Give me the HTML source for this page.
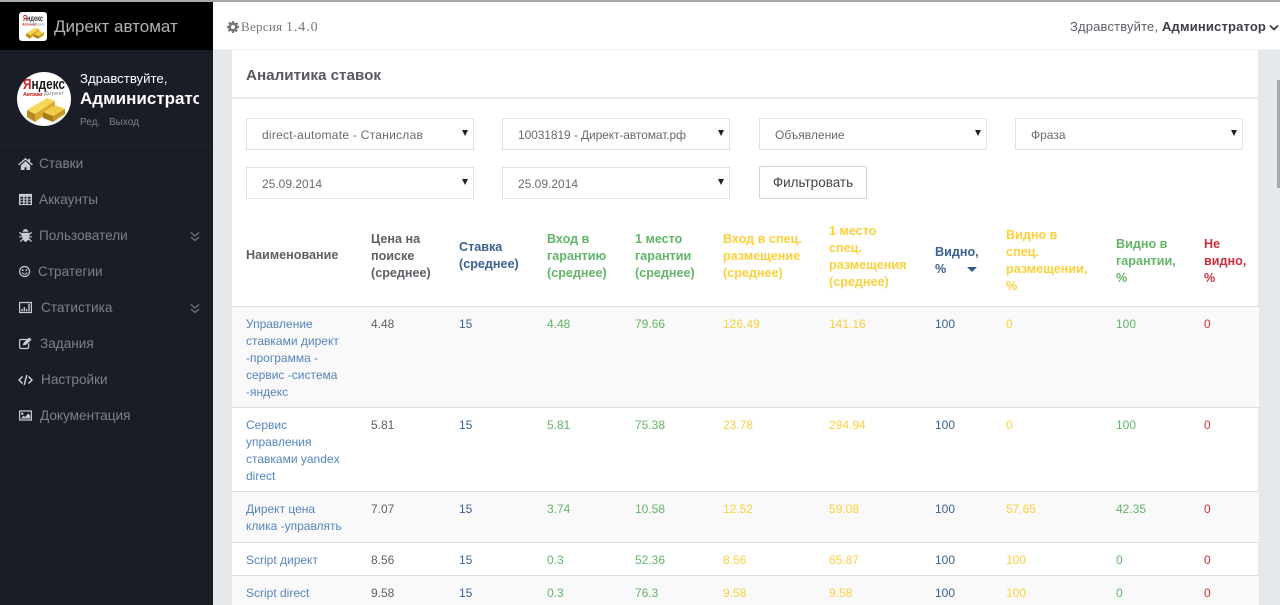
<!DOCTYPE html>
<html lang="ru"><head><meta charset="utf-8"><title>Аналитика ставок</title>
<style>
html,body{margin:0;padding:0;width:1280px;height:605px;overflow:hidden;background:#e5e9ec;font-family:"Liberation Sans",sans-serif;font-size:12px;color:#58595f}
.a{position:absolute}
.t{position:absolute;white-space:nowrap;line-height:17px}
.h{font-weight:bold;font-size:12.6px}
.sel{position:absolute;width:226px;height:30px;background:#fff;border:1px solid #e2e2e4}
.sel span{position:absolute;left:15px;top:7.5px;line-height:17px;white-space:nowrap;color:#6a6a6e}
.sel i{position:absolute;right:5px;top:11px;width:0;height:0;border-left:3.5px solid transparent;border-right:3.5px solid transparent;border-top:6px solid #222}
.m{position:absolute;white-space:nowrap;color:#7d8087;font-size:13.6px;line-height:18px}
.ic{position:absolute;left:18px;width:15px;height:13px;fill:#c9cbd0;stroke:none}
.k{color:#5f6066}.b{color:#3a6292}.g{color:#63b568}.y{color:#fcd03c}.r{color:#c9303c}.l{color:#5485bc}
</style></head><body>
<div class="a" style="left:0;top:0;width:1280px;height:2px;background:#a9a9a9"></div>

<!-- sidebar -->
<div class="a" style="left:0;top:2px;width:213px;height:603px;background:#1a1d26"></div>
<div class="a" style="left:0;top:2px;width:213px;height:48px;background:#000"></div>
<svg class="a" style="left:19px;top:12px" width="28" height="29" viewBox="0 0 28 29">
<rect width="28" height="29" rx="3" fill="#fff"/>
<text x="14" y="9" text-anchor="middle" font-family="Liberation Sans" font-weight="bold" font-size="8" textLength="20" lengthAdjust="spacingAndGlyphs" fill="#333"><tspan fill="#b3242a">Я</tspan>ндекс</text>
<text x="3" y="13.500" font-family="Liberation Sans" font-weight="bold" font-size="3.500" fill="#c9302c">Автомат</text>
<text x="15" y="13.500" font-family="Liberation Sans" font-size="3.500" fill="#888">Директ</text>
<g transform="translate(2.500 3.300) scale(.47)">
<path d="M10 38L30 26 38 29 18 42z" fill="#f4d75c"/><path d="M10 38l8 4v8l-8-5z" fill="#b8891c"/><path d="M18 42l20-13v7L18 50z" fill="#d9aa2c"/>
<path d="M26 40l12-7 10 4-12 7z" fill="#eecb4b"/><path d="M36 44l12-7v5l-12 8z" fill="#c99a22"/><path d="M26 40l10 4v6l-10-4z" fill="#a97c18"/>
</g>
</svg>
<div class="t" style="left:54px;top:17px;font-size:17px;line-height:20px;color:#b0b2b6">Директ автомат</div>
<svg class="a" style="left:17px;top:72px" width="54" height="54" viewBox="0 0 54 54">
<circle cx="27" cy="27" r="27" fill="#fff"/>
<text x="27" y="17" text-anchor="middle" font-family="Liberation Sans" font-size="15" font-weight="bold" textLength="42" lengthAdjust="spacingAndGlyphs" fill="#1a1a1a"><tspan fill="#d2202a">Я</tspan>ндекс</text>
<text x="6" y="24" font-family="Liberation Sans" font-size="5.500" font-weight="bold" textLength="20" fill="#c9302c">Автомат</text>
<text x="27" y="23" font-family="Liberation Sans" font-size="5.500" textLength="20" fill="#777">Директ</text>
<path d="M10 38L30 26 38 29 18 42z" fill="#f4d75c"/><path d="M10 38l8 4v8l-8-5z" fill="#b8891c"/><path d="M18 42l20-13v7L18 50z" fill="#d9aa2c"/>
<path d="M26 40l12-7 10 4-12 7z" fill="#eecb4b"/><path d="M36 44l12-7v5l-12 8z" fill="#c99a22"/><path d="M26 40l10 4v6l-10-4z" fill="#a97c18"/>
</svg>
<div class="t" style="left:80px;top:70px;font-size:13.200px;color:#fff">Здравствуйте,</div>
<div class="a" style="left:80px;top:88px;width:119px;overflow:hidden;white-space:nowrap;font-size:17px;line-height:21px;font-weight:bold;color:#fff">Администратор</div>
<div class="t" style="left:80px;top:114px;font-size:10px;color:#7d8087">Ред.</div>
<div class="t" style="left:109px;top:114px;font-size:10px;color:#7d8087">Выход</div>
<div class="a" style="left:0;top:144px;width:213px;height:1px;background:#20232d"></div>

<svg class="ic" style="top:157px" viewBox="0 0 16 14"><path d="M8 1L0 8l1 1 7-6 7 6 1-1-3-2.600V2h-2v1.600zM3 9v5h4v-3h2v3h4V9L8 4.500z"/></svg>
<div class="m" style="left:39px;top:154.500px">Ставки</div>
<svg class="ic" style="top:193px" viewBox="0 0 16 14"><path fill-rule="evenodd" d="M1 1h14v12H1zM2.500 4v2h3V4zm4.500 0v2h2V4zm3.500 0v2h3V4zM2.500 7v2h3V7zM7 7v2h2V7zm3.500 0v2h3V7zm-8 3v2h3v-2zM7 10v2h2v-2zm3.500 0v2h3v-2z"/></svg>
<div class="m" style="left:39px;top:190.500px">Аккаунты</div>
<svg class="ic" style="top:229px" viewBox="0 0 16 14"><path d="M5 3a3 3 0 0 1 6 0zM4 4h8v1l2-2 1 1-3 3v1h3v1h-3v1l3 3-1 1-2.500-2.500C9.500 13 9 14 8 14s-1.500-1-2.500-2.500L3 14l-1-1 3-3V9H1V8h3V7L1 4l1-1 2 2z"/></svg>
<div class="m" style="left:39px;top:226.500px">Пользователи</div>
<svg class="a" style="left:190px;top:231px" width="10" height="11" viewBox="0 0 10 11" fill="none" stroke="#6e7178" stroke-width="1.300"><path d="M1 1.500l4 3.500 4-3.500M1 6l4 3.500L9 6"/></svg>
<svg class="ic" style="top:265px" viewBox="0 0 16 14"><path fill-rule="evenodd" d="M7 1a6 6 0 1 1 0 12A6 6 0 0 1 7 1zm0 1.300a4.700 4.700 0 1 0 0 9.400 4.700 4.700 0 0 0 0-9.400zM5 4.500a1 1 0 1 1 0 2 1 1 0 0 1 0-2zm4 0a1 1 0 1 1 0 2 1 1 0 0 1 0-2zM3.800 8h1.300c.4 1 1 1.400 1.900 1.400S8.500 9 8.900 8h1.300c-.5 1.700-1.700 2.500-3.200 2.500S4.300 9.700 3.800 8z"/></svg>
<div class="m" style="left:38px;top:262.500px">Стратегии</div>
<svg class="ic" style="top:301px" viewBox="0 0 16 14"><path fill-rule="evenodd" d="M1 1h14v12H1zm1.300 1.300v9.400h11.400V2.300zM3.500 8.500h1.500V11H3.500zm2.500-2h1.500V11H6zm2.500 2H10V11H8.500zm2.500-5.500h1.500v8H11z"/></svg>
<div class="m" style="left:41px;top:298.500px">Статистика</div>
<svg class="a" style="left:190px;top:303px" width="10" height="11" viewBox="0 0 10 11" fill="none" stroke="#6e7178" stroke-width="1.300"><path d="M1 1.500l4 3.500 4-3.500M1 6l4 3.500L9 6"/></svg>
<svg class="ic" style="top:337px" viewBox="0 0 16 14"><path d="M3 2h8L9.700 3.300H3.200c-.5 0-.9.400-.9.900v6.600c0 .5.400.9.900.9h6.600c.5 0 .9-.4.900-.9V7.500L12 6v5c0 1.200-.8 2-2 2H3c-1.200 0-2-.8-2-2V4c0-1.200.8-2 2-2zM5 9l1-3 6-5.500 2.500 2.500L8.500 8.500z"/></svg>
<div class="m" style="left:40px;top:334.500px">Задания</div>
<svg class="a" style="left:18px;top:374px" width="15" height="12" viewBox="0 0 15 12" fill="none" stroke="#d5d6da" stroke-width="1.400"><path d="M4.500 2.500L1 6l3.500 3.500M10.500 2.500L14 6l-3.500 3.500M8.800 1L6.200 11"/></svg>
<div class="m" style="left:41px;top:370.500px">Настройки</div>
<svg class="ic" style="top:409px" viewBox="0 0 16 14"><path fill-rule="evenodd" d="M1 1.500h14v11H1zm1.300 1.300v8.400h11.400V2.800zM4.500 3.800a1.300 1.300 0 1 1 0 2.600 1.300 1.300 0 0 1 0-2.600zM3 10.200l3-3 1.500 1.500 3.500-4 2 2.500v3z"/></svg>
<div class="m" style="left:40px;top:406.500px">Документация</div>

<!-- top bar -->
<div class="a" style="left:213px;top:2px;width:1067px;height:47px;background:#fff;border-bottom:1px solid #eceef0"></div>
<svg class="a" style="left:227px;top:21px" width="12" height="12" viewBox="0 0 12 12"><path fill="#777" fill-rule="evenodd" d="M5 0h2l.3 1.600 1.100.5L9.800 1.200l1.400 1.400-.9 1.400.5 1.100L12 5v2l-1.700.3-.5 1.100.9 1.400-1.400 1.400-1.400-.9-1.100.5L7 12H5l-.3-1.700-1.100-.5-1.400.9-1.400-1.400.9-1.400-.5-1.100L0 7V5l1.700-.3.500-1.100-.9-1.400 1.400-1.400 1.400.9 1.100-.5zM6 4a2 2 0 1 0 0 4 2 2 0 0 0 0-4z"/></svg>
<div class="t" style="left:241px;top:18px;font-family:'Liberation Serif',serif;font-size:13px;color:#777;letter-spacing:.3px">Версия <span style="font-size:14px;letter-spacing:.9px">1.4.0</span></div>
<div class="t" style="left:1070px;top:18px;font-size:13px;color:#5f6067;letter-spacing:.16px">Здравствуйте, <b style="color:#3d3f47">Администратор</b></div>
<svg class="a" style="left:1269px;top:24px" width="10" height="8" viewBox="0 0 10 8" fill="none" stroke="#3d3f47" stroke-width="1.800"><path d="M1 1.500l4 4 4-4"/></svg>

<!-- panel -->
<div class="a" style="left:232px;top:50px;width:1026px;height:555px;background:#fff"></div>
<div class="a" style="left:232px;top:97px;width:1026px;height:2px;background:#ececee"></div>
<div class="t" style="left:246px;top:66.500px;font-size:15.200px;line-height:18px;font-weight:bold;color:#58595f">Аналитика ставок</div>
<div class="a" style="left:1277px;top:80px;width:3px;height:108px;background:#a8a8a8"></div>

<div class="sel" style="left:246px;top:118px"><span style="letter-spacing:.26px">direct-automate - Станислав</span><i></i></div>
<div class="sel" style="left:502px;top:118px"><span style="letter-spacing:-.1px">10031819 - Директ-автомат.рф</span><i></i></div>
<div class="sel" style="left:759px;top:118px"><span>Объявление</span><i></i></div>
<div class="sel" style="left:1015px;top:118px"><span>Фраза</span><i></i></div>
<div class="sel" style="left:246px;top:167px"><span>25.09.2014</span><i></i></div>
<div class="sel" style="left:502px;top:167px"><span>25.09.2014</span><i></i></div>
<div class="a" style="left:759px;top:166px;width:106px;height:31px;background:#fff;border:1px solid #d5d5d8;border-radius:2px;text-align:center;line-height:32px;font-size:13.500px;color:#444">Фильтровать</div>

<!-- table rows -->
<div class="a" style="left:232px;top:307px;width:1027px;height:100px;background:#f9f9f9"></div>
<div class="a" style="left:232px;top:492px;width:1027px;height:50px;background:#f9f9f9"></div>
<div class="a" style="left:232px;top:576px;width:1027px;height:29px;background:#f9f9f9"></div>
<div class="a" style="left:232px;top:306px;width:1027px;height:1px;background:#dcdde0"></div>
<div class="a" style="left:232px;top:407px;width:1027px;height:1px;background:#dcdde0"></div>
<div class="a" style="left:232px;top:491px;width:1027px;height:1px;background:#dcdde0"></div>
<div class="a" style="left:232px;top:542px;width:1027px;height:1px;background:#dcdde0"></div>
<div class="a" style="left:232px;top:575px;width:1027px;height:1px;background:#dcdde0"></div>

<div class="a" style="left:0;top:1px;width:1280px;height:604px">
<!-- header -->
<div class="t h k" style="left:246px;top:246px">Наименование</div>
<div class="t h k" style="left:371px;top:229.500px">Цена на<br>поиске<br>(среднее)</div>
<div class="t h b" style="left:459px;top:238px">Ставка<br>(среднее)</div>
<div class="t h g" style="left:547px;top:229.500px">Вход в<br>гарантию<br>(среднее)</div>
<div class="t h g" style="left:635px;top:229.500px">1 место<br>гарантии<br>(среднее)</div>
<div class="t h y" style="left:723px;top:229.500px">Вход в спец.<br>размещение<br>(среднее)</div>
<div class="t h y" style="left:829px;top:221.500px">1 место<br>спец.<br>размещения<br>(среднее)</div>
<div class="t h b" style="left:935px;top:242.500px">Видно,<br>%</div>
<div class="a" style="left:967px;top:266px;width:0;height:0;border-left:5px solid transparent;border-right:5px solid transparent;border-top:5px solid #2f5a8f"></div>
<div class="t h y" style="left:1006px;top:225.500px">Видно в<br>спец.<br>размещении,<br>%</div>
<div class="t h g" style="left:1116px;top:234.500px">Видно в<br>гарантии,<br>%</div>
<div class="t h r" style="left:1204px;top:234.500px">Не<br>видно,<br>%</div>

<!-- row 1 -->
<div class="t l" style="left:246px;top:315px">Управление<br>ставками директ<br>-программа -<br>сервис -система<br>-яндекс</div>
<div class="t k" style="left:371px;top:315px">4.48</div><div class="t b" style="left:459px;top:315px">15</div><div class="t g" style="left:547px;top:315px">4.48</div><div class="t g" style="left:635px;top:315px">79.66</div><div class="t y" style="left:723px;top:315px">126.49</div><div class="t y" style="left:829px;top:315px">141.16</div><div class="t b" style="left:935px;top:315px">100</div><div class="t y" style="left:1006px;top:315px">0</div><div class="t g" style="left:1116px;top:315px">100</div><div class="t r" style="left:1204px;top:315px">0</div>
<!-- row 2 -->
<div class="t l" style="left:246px;top:416px">Сервис<br>управления<br>ставками yandex<br>direct</div>
<div class="t k" style="left:371px;top:416px">5.81</div><div class="t b" style="left:459px;top:416px">15</div><div class="t g" style="left:547px;top:416px">5.81</div><div class="t g" style="left:635px;top:416px">75.38</div><div class="t y" style="left:723px;top:416px">23.78</div><div class="t y" style="left:829px;top:416px">294.94</div><div class="t b" style="left:935px;top:416px">100</div><div class="t y" style="left:1006px;top:416px">0</div><div class="t g" style="left:1116px;top:416px">100</div><div class="t r" style="left:1204px;top:416px">0</div>
<!-- row 3 -->
<div class="t l" style="left:246px;top:500px">Директ цена<br>клика -управлять</div>
<div class="t k" style="left:371px;top:500px">7.07</div><div class="t b" style="left:459px;top:500px">15</div><div class="t g" style="left:547px;top:500px">3.74</div><div class="t g" style="left:635px;top:500px">10.58</div><div class="t y" style="left:723px;top:500px">12.52</div><div class="t y" style="left:829px;top:500px">59.08</div><div class="t b" style="left:935px;top:500px">100</div><div class="t y" style="left:1006px;top:500px">57.65</div><div class="t g" style="left:1116px;top:500px">42.35</div><div class="t r" style="left:1204px;top:500px">0</div>
<!-- row 4 -->
<div class="t l" style="left:246px;top:551px">Script директ</div>
<div class="t k" style="left:371px;top:551px">8.56</div><div class="t b" style="left:459px;top:551px">15</div><div class="t g" style="left:547px;top:551px">0.3</div><div class="t g" style="left:635px;top:551px">52.36</div><div class="t y" style="left:723px;top:551px">8.56</div><div class="t y" style="left:829px;top:551px">65.87</div><div class="t b" style="left:935px;top:551px">100</div><div class="t y" style="left:1006px;top:551px">100</div><div class="t g" style="left:1116px;top:551px">0</div><div class="t r" style="left:1204px;top:551px">0</div>
<!-- row 5 -->
<div class="t l" style="left:246px;top:584px">Script direct</div>
<div class="t k" style="left:371px;top:584px">9.58</div><div class="t b" style="left:459px;top:584px">15</div><div class="t g" style="left:547px;top:584px">0.3</div><div class="t g" style="left:635px;top:584px">76.3</div><div class="t y" style="left:723px;top:584px">9.58</div><div class="t y" style="left:829px;top:584px">9.58</div><div class="t b" style="left:935px;top:584px">100</div><div class="t y" style="left:1006px;top:584px">100</div><div class="t g" style="left:1116px;top:584px">0</div><div class="t r" style="left:1204px;top:584px">0</div>
</div>
</body></html>
